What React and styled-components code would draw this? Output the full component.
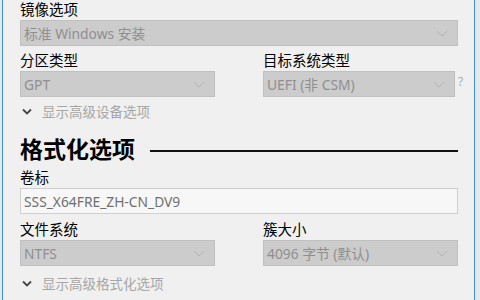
import React from 'react';
import styled, { createGlobalStyle } from 'styled-components';

const GlobalStyle = createGlobalStyle`
    html, body {
        margin: 0;
        padding: 0;
        background: #e9edf1;
    }
    body {
        font-family: "Noto Sans", "Noto Sans CJK SC", sans-serif;
    }
`;

const Frame = styled.div`
    width: 480px;
    height: 300px;
    display: flex;
    background: #e6e9ec;
    overflow: hidden;
`;

const Window = styled.div`
    margin-left: 2px;
    width: 473px;
    height: 300px;
    box-sizing: border-box;
    border-left: 1px solid #3d8fdc;
    border-right: 1px solid #3d8fdc;
    background: #f0f0f0;
    padding: 0 16px 0 17px;
`;

const Label = styled.div`
    font-size: 14.5px;
    line-height: 18px;
    height: 18px;
    color: #000;
    margin-bottom: 2px;
    white-space: nowrap;
`;

const Field = styled.div`
    margin-bottom: ${p => p.gap ?? 5}px;
`;

const Row = styled.div`
    display: flex;
    gap: 48px;
    & > * {
        width: 196px;
    }
`;

const ComboRow = styled.div`
    display: flex;
    align-items: center;
`;

const Combo = styled.div`
    flex: 1;
    height: 26px;
    box-sizing: border-box;
    background: #cccccc;
    border: 1px solid #c0c0c0;
    display: flex;
    align-items: center;
    justify-content: space-between;
    padding: 0 9px 0 3px;
    font-size: 13.8px;
    color: #8f8f8f;
    white-space: nowrap;
`;

const TextBox = styled.div`
    height: 26px;
    box-sizing: border-box;
    background: #f7f7f7;
    border: 1px solid #cfcfcf;
    display: flex;
    align-items: center;
    padding: 0 3px;
    font-size: 13.8px;
    color: #6f6f6f;
`;

const Help = styled.span`
    width: 0;
    margin-left: 3px;
    font-size: 12px;
    color: #a9a9a9;
    overflow: visible;
    white-space: nowrap;
    position: relative;
    top: -3px;
`;

const Toggle = styled.div`
    display: flex;
    align-items: center;
    height: 24px;
    gap: 10px;
    padding-left: 2px;
    font-size: 13.5px;
    color: #a6a6a6;
`;

const Heading = styled.div`
    display: flex;
    align-items: center;
    height: 30px;
    margin-top: ${p => p.top}px;
    margin-bottom: 4px;
`;

const HeadingText = styled.h2`
    margin: 0;
    font-size: 23px;
    font-weight: 700;
    line-height: 30px;
    color: #000;
`;

const Rule = styled.div`
    flex: 1;
    height: 2px;
    margin-left: 15px;
    background: #111;
    position: relative;
    top: 2px;
`;

function Chevron() {
    return (
        <svg width="12" height="7" viewBox="0 0 12 7">
            <path d="M1 1 L6 6 L11 1" fill="none" stroke="#b3b3b3" strokeWidth="1" />
        </svg>
    );
}

function ToggleArrow() {
    return (
        <svg width="10" height="7" viewBox="0 0 10 7">
            <path d="M1 1.5 L5 5.5 L9 1.5" fill="none" stroke="#444" strokeWidth="1.8" />
        </svg>
    );
}

function Select({ value }) {
    return (
        <Combo>
            <span>{value}</span>
            <Chevron />
        </Combo>
    );
}

export default function App() {
    return (
        <>
            <GlobalStyle />
            <Frame>
                <Window>
                    <Field gap={5}>
                        <Label>镜像选项</Label>
                        <Select value="标准 Windows 安装" />
                    </Field>
                    <Row>
                        <Field gap={2}>
                            <Label>分区类型</Label>
                            <Select value="GPT" />
                        </Field>
                        <Field gap={2}>
                            <Label>目标系统类型</Label>
                            <ComboRow>
                                <Select value="UEFI (非 CSM)" />
                                <Help>?</Help>
                            </ComboRow>
                        </Field>
                    </Row>
                    <Toggle>
                        <ToggleArrow />
                        <span>显示高级设备选项</span>
                    </Toggle>

                    <Heading top={11}>
                        <HeadingText>格式化选项</HeadingText>
                        <Rule />
                    </Heading>

                    <Field gap={6}>
                        <Label>卷标</Label>
                        <TextBox>SSS_X64FRE_ZH-CN_DV9</TextBox>
                    </Field>
                    <Row>
                        <Field gap={5}>
                            <Label>文件系统</Label>
                            <Select value="NTFS" />
                        </Field>
                        <Field gap={5}>
                            <Label>簇大小</Label>
                            <Select value="4096 字节 (默认)" />
                        </Field>
                    </Row>
                    <Toggle>
                        <ToggleArrow />
                        <span>显示高级格式化选项</span>
                    </Toggle>
                </Window>
            </Frame>
        </>
    );
}
